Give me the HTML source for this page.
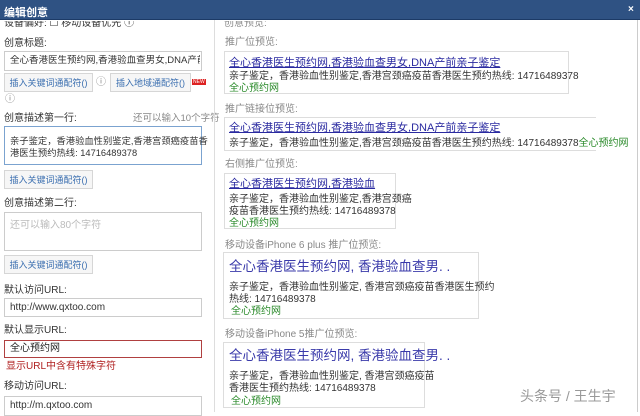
<!DOCTYPE html><html><head><meta charset="utf-8"><style>
*{margin:0;padding:0;box-sizing:border-box}
body{width:640px;height:412px;overflow:hidden;background:#fff;position:relative;font-family:"Liberation Sans","Noto Sans CJK SC",sans-serif;font-size:10px;color:#333}
.a{position:absolute;white-space:nowrap;line-height:12px}
.hd{position:absolute;left:0;top:0;width:640px;height:20px;background:#2f5283;color:#fff;font-size:11px;font-weight:bold;padding:4px 4px;border-bottom:1px solid #1c3a66}
.box{position:absolute;border:1px solid #ccc;background:#fff}
.btn{position:absolute;border:1px solid #d6d6d6;background:#f6f6f6;color:#3b6fb0;font-size:9px;text-align:center;line-height:18px}
.lk{color:#2a2aa0;text-decoration:underline;font-size:11px}
.g{color:#2a8a2a}
.gr{color:#888}
.pv{position:absolute;border:1px solid #ddd;background:#fff}
.t2{color:#3a3aaa;font-size:13.5px}
</style></head><body>
<div class="hd">编辑创意</div>
<div class="a" style="color:#fff;left:628px;top:4px;font-weight:bold">×</div>
<div class="a" style="left:4px;top:18px;clip-path:inset(3px 0 0 0)">设备偏好: ☐ 移动设备优先 ⓘ</div>
<div class="a" style="left:4px;top:38px">创意标题:</div>
<div class="box" style="left:4px;top:51px;width:198px;height:20px"></div>
<div class="a" style="left:10px;top:55px;width:190px;overflow:hidden;font-size:9.5px">全心香港医生预约网,香港验血查男女,DNA产前亲子</div>
<div class="btn" style="left:4px;top:73px;width:89px;height:19px">插入关键词通配符()</div>
<div class="a gr" style="left:96px;top:77px">ⓘ</div>
<div class="btn" style="left:110px;top:73px;width:81px;height:19px">插入地域通配符()</div>
<div class="a" style="left:192px;top:79px;background:#d22;color:#fff;font-size:5px;line-height:6px;padding:0 1px">NEW</div>
<div class="a gr" style="left:5px;top:94px">ⓘ</div>
<div class="a" style="left:4px;top:113px">创意描述第一行:</div>
<div class="a gr" style="left:133px;top:113px;font-size:9.5px">还可以输入10个字符</div>
<div class="box" style="left:4px;top:126px;width:198px;height:39px;border-color:#7ba3d0"></div>
<div class="a" style="left:10px;top:135px;line-height:12px;font-size:9.3px">亲子鉴定，香港验血性别鉴定,香港宫颈癌疫苗香<br>港医生预约热线: 14716489378</div>
<div class="btn" style="left:4px;top:170px;width:89px;height:19px">插入关键词通配符()</div>
<div class="a" style="left:4px;top:198px">创意描述第二行:</div>
<div class="box" style="left:4px;top:212px;width:198px;height:39px"></div>
<div class="a" style="left:10px;top:220px;color:#bbb">还可以输入80个字符</div>
<div class="btn" style="left:4px;top:255px;width:89px;height:19px">插入关键词通配符()</div>
<div class="a" style="left:4px;top:285px">默认访问URL:</div>
<div class="box" style="left:4px;top:298px;width:198px;height:19px"></div>
<div class="a" style="left:10px;top:302px">http://www.qxtoo.com</div>
<div class="a" style="left:4px;top:325px">默认显示URL:</div>
<div class="box" style="left:4px;top:340px;width:198px;height:18px;border-color:#b04040"></div>
<div class="a" style="left:10px;top:343px;color:#222">全心预约网</div>
<div class="a" style="left:6px;top:361px;color:#b02020">显示URL中含有特殊字符</div>
<div class="a" style="left:4px;top:381px">移动访问URL:</div>
<div class="box" style="left:4px;top:396px;width:198px;height:20px"></div>
<div class="a" style="left:10px;top:400px">http://m.qxtoo.com</div>
<div style="position:absolute;left:214px;top:20px;width:1px;height:392px;background:#ddd"></div>
<div style="position:absolute;left:637px;top:20px;width:1px;height:392px;background:#ccc"></div>

<div class="a gr" style="left:224px;top:18px;clip-path:inset(3px 0 0 0)">创意预览:</div>
<div class="a gr" style="left:225px;top:37px">推广位预览:</div>
<div class="pv" style="left:224px;top:51px;width:345px;height:43px"></div>
<div class="a lk" style="left:229px;top:57px">全心香港医生预约网,香港验血查男女,DNA产前亲子鉴定</div>
<div class="a" style="left:229px;top:71px">亲子鉴定，香港验血性别鉴定,香港宫颈癌疫苗香港医生预约热线: 14716489378</div>
<div class="a g" style="left:229px;top:83px">全心预约网</div>
<div class="a gr" style="left:225px;top:104px">推广链接位预览:</div>
<div style="position:absolute;left:224px;top:117px;width:372px;height:34px;border-left:1px solid #ddd;border-top:1px solid #ddd;border-bottom:1px solid #ddd"></div>
<div class="a lk" style="left:229px;top:122px">全心香港医生预约网,香港验血查男女,DNA产前亲子鉴定</div>
<div class="a" style="left:229px;top:138px">亲子鉴定，香港验血性别鉴定,香港宫颈癌疫苗香港医生预约热线: 14716489378<span class="g">全心预约网</span></div>
<div class="a gr" style="left:225px;top:159px">右侧推广位预览:</div>
<div class="pv" style="left:224px;top:173px;width:172px;height:56px"></div>
<div class="a lk" style="left:229px;top:178px">全心香港医生预约网,香港验血</div>
<div class="a" style="left:229px;top:194px">亲子鉴定，香港验血性别鉴定,香港宫颈癌<br>疫苗香港医生预约热线: 14716489378</div>
<div class="a g" style="left:229px;top:218px">全心预约网</div>
<div class="a gr" style="left:225px;top:240px">移动设备iPhone 6 plus 推广位预览:</div>
<div class="pv" style="left:223px;top:252px;width:256px;height:67px"></div>
<div class="a t2" style="left:229px;top:259px;line-height:16px">全心香港医生预约网, 香港验血查男. .</div>
<div class="a" style="left:229px;top:282px">亲子鉴定，香港验血性别鉴定, 香港宫颈癌疫苗香港医生预约<br>热线: 14716489378</div>
<div class="a g" style="left:231px;top:306px">全心预约网</div>
<div class="a gr" style="left:225px;top:329px">移动设备iPhone 5推广位预览:</div>
<div class="pv" style="left:223px;top:342px;width:202px;height:66px"></div>
<div class="a t2" style="left:229px;top:348px;line-height:16px">全心香港医生预约网, 香港验血查男. .</div>
<div class="a" style="left:229px;top:371px">亲子鉴定，香港验血性别鉴定, 香港宫颈癌疫苗<br>香港医生预约热线: 14716489378</div>
<div class="a g" style="left:231px;top:396px">全心预约网</div>
<div class="a" style="left:520px;top:388px;font-size:14px;line-height:16px;color:#999">头条号 / 王生宇</div>
</body></html>
